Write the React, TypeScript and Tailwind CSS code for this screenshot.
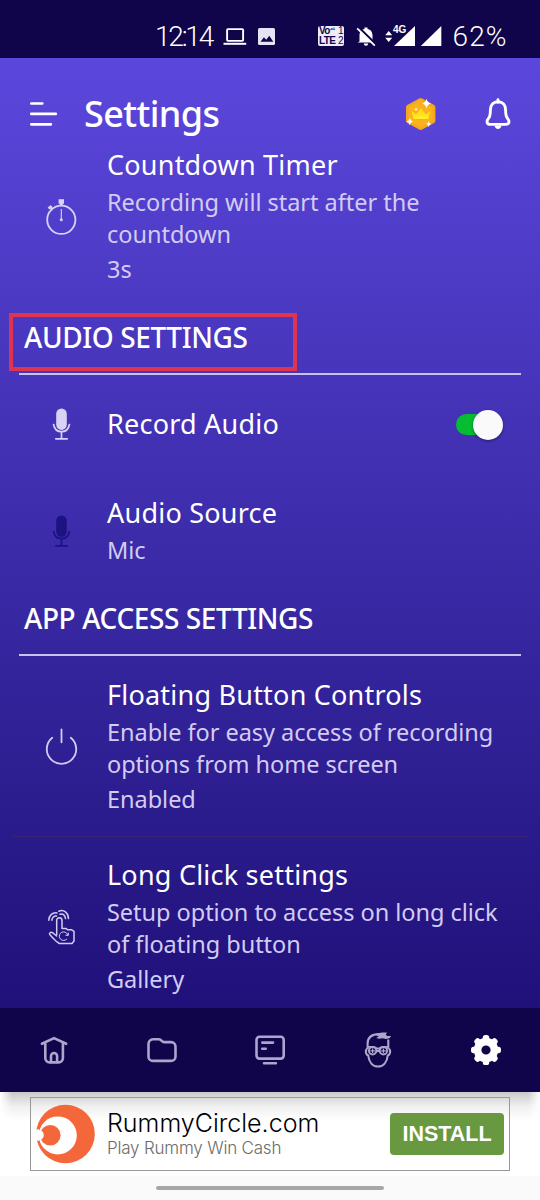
import React, { useState } from 'react';

const StopwatchIcon = () => (
  <svg width="36" height="44" viewBox="0 0 36 44" fill="none" stroke="#d9d2f6" strokeWidth="1.8">
    <circle cx="18.3" cy="26.8" r="14.1" />
    <rect x="15.6" y="6.2" width="5.4" height="4.6" fill="#d9d2f6" stroke="none" />
    <path d="M18.3 10v3" strokeWidth="3" />
    <path d="M5.5 15.5l3-2.6M7 14l2.6 2.4" strokeWidth="2.6" />
    <path d="M18.3 16v10" strokeWidth="1.1" />
    <circle cx="18.3" cy="26.8" r="1.5" fill="#d9d2f6" stroke="none" />
  </svg>
);

const MicIcon = ({ color }: { color: string }) => (
  <svg width="36" height="44" viewBox="0 0.5 36 44" fill="none" stroke={color} strokeWidth="1.7" strokeLinecap="round">
    <rect x="13.2" y="8" width="10.6" height="21.4" rx="5.3" fill={color} stroke="none" />
    <path d="M10.6 24c.8 4.4 3.8 7.200 7.9 7.200s7.100-2.800 7.900-7.200M18.500 31.500v6.700M12.800 38.300h11.400" />
  </svg>
);

const PowerIcon = () => (
  <svg width="36" height="44" viewBox="0 0.5 36 44" fill="none" stroke="#d3ccf2" strokeWidth="1.8" strokeLinecap="round">
    <path d="M9.200 15.200a14.700 14.700 0 1 0 18.600 0M18.500 7v12.800" />
  </svg>
);

const LongClickIcon = () => (
  <svg width="36" height="44" viewBox="0 0 36 44" fill="none" stroke="#d3ccf2" strokeWidth="1.5" strokeLinecap="round" strokeLinejoin="round">
    <path d="M13.700 31.500V17.400a2.650 2.650 0 0 1 5.300 0v8.200h4.200l1.300 1.200h4.200l2.300 1.500v9.700l-2 2.500H16.400c-2.600-1.600-4.200-2.800-5.600-4.600L6.700 31.400c-.8-1.700 1.200-2.700 2.700-1.700l4.300 3.300" />
    <path d="M5.800 17.200c0-4.500 3.400-8 8.200-7.300M8.900 17.200c.1-2.700 2.100-4.600 4.600-4.100M15.800 8.200c5-2.200 9.500 1.600 9.700 7.400M17 11.300c3-1 5.300.9 5.500 4.300" />
    <path d="M23.700 36.200a4.300 4.300 0 1 1-.2-6.200l1.300 2.100M25.300 30v2.300h-2.400" strokeWidth="1" />
  </svg>
);

const HomeIcon = () => (
  <svg width="36" height="36" viewBox="0 0 36 36" fill="none" stroke="#aba6cc" strokeWidth="2.600" strokeLinecap="round" strokeLinejoin="round">
    <path d="M5.900 11.800L18 6.100l12.200 5.700M9.300 11.500v14.700a4.200 4.200 0 0 0 4.200 4.200h9.200a4.200 4.200 0 0 0 4.200-4.200V11.500" />
    <path d="M15 30v-6a3.050 3.050 0 0 1 6.100 0v6" />
  </svg>
);

const FolderIcon = () => (
  <svg width="36" height="36" viewBox="0 0 36 36" fill="none" stroke="#aba6cc" strokeWidth="2.600" strokeLinejoin="round">
    <path d="M9 7.300h5.700c1.200 0 2 .4 2.700 1.300.7 1 1.400 1.500 2.600 1.500h7a4.500 4.500 0 0 1 4.500 4.500v9.800a4.500 4.500 0 0 1-4.500 4.500H9a4.500 4.500 0 0 1-4.500-4.500V11.800A4.500 4.500 0 0 1 9 7.300z" />
  </svg>
);

const ScreenIcon = () => (
  <svg width="36" height="36" viewBox="0 0 36 36" fill="none" stroke="#aba6cc" strokeWidth="2.600" strokeLinecap="round">
    <rect x="4.500" y="4.700" width="27.200" height="21.900" rx="3" />
    <path d="M10.300 10.600h10.700M10.300 16.700h3.400M12 31.300h11.900" />
  </svg>
);

const GamerIcon = () => (
  <svg width="36" height="36" viewBox="0 0 36 36" fill="none" stroke="#aba6cc" strokeWidth="2.100" strokeLinejoin="round">
    <path d="M7.600 17v-5.500C7.600 5.500 12 2.200 19 2.100M28.300 17V7.500" />
    <path d="M15 2.500C19 .6 23 .2 27 .6l-1.200 2 1.200 1.400h4.200l-1.700 2.300-3.600.7-3-.8-3.800.6-3-.9 2.700-1.300z" fill="#aba6cc" stroke="none" />
    <path d="M7.200 16.800c-2.200 1.200-1.500 6.300 1 6.500.8 6.800 4.500 11.200 9.800 11.200s9-4.400 9.800-11.200c2.500-.2 3.200-5.300 1-6.500" />
    <path d="M7.500 14.900h6.200l4.300 1.900 4.300-1.900h6.200" strokeWidth="1.800" />
    <circle cx="12.600" cy="18.800" r="3.700" strokeWidth="1.900" />
    <circle cx="23.400" cy="18.800" r="3.700" strokeWidth="1.900" />
    <path d="M12.600 16.500v4.600M10.300 18.800h4.600M15.700 17.200l4.600 3.200M20.300 17.200l-4.600 3.200M23.400 16.500v4.600M21.100 18.800h4.600" strokeWidth="1.200" />
  </svg>
);

const teeth = [0, 45, 90, 135, 180, 225, 270, 315];

const GearIcon = () => (
  <svg width="36" height="36" viewBox="0 0 36 36">
    <circle cx="18" cy="18" r="8.400" fill="none" stroke="#fff" strokeWidth="7.600" />
    {teeth.map((a) => (
      <rect key={a} x="14.800" y="3" width="6.400" height="6" rx="2.600" fill="#fff" transform={`rotate(${a} 18 18)`} />
    ))}
  </svg>
);

const StatusBar = () => (
  <div className="flex h-[58px] items-start bg-[#10054a] pt-[23px] font-['Roboto',sans-serif] text-[28px] leading-[28px] font-light text-white">
    <span className="ml-[155px] w-[68px] shrink-0 tracking-[-2.2px]">12:14</span>
    <svg width="53" height="28" viewBox="223 23 53 28" className="shrink-0">
      <rect x="227.100" y="29.100" width="16" height="11.800" rx="0.800" fill="none" stroke="#fff" strokeWidth="1.900" />
      <path d="M223.500 43.800h22.700" stroke="#fff" strokeWidth="2" />
      <rect x="258" y="28" width="17" height="17" rx="1.500" fill="#e6e3f5" />
      <path d="M260.500 41.700l3.400-4.400 2.300 2.400 3.100-4 4 6z" fill="#10054a" />
    </svg>
    <div className="ml-[42px] mt-[3px] flex h-[20px] w-[26px] shrink-0 justify-center gap-[1px] rounded-[2px] bg-[#eeecf8] font-['Liberation_Sans',sans-serif] text-[10px] leading-[9.500px] font-bold tracking-[-0.6px] text-[#10054a]">
      <div className="w-[18px]">
        <div className="flex">Vo<span className="text-[7px] leading-[7px]">⁴¹</span></div>
        <div>LTE</div>
      </div>
      <div className="font-medium">
        <div>1</div>
        <div>2</div>
      </div>
    </div>
    <div className="relative ml-[11px] h-[28px] w-[87px] shrink-0">
      <svg width="87" height="28" viewBox="355 23 87 28">
        <path d="M359.500 41.500v-6c0-4 2-6 5-6.600v-1.500h3v1.500c3 .6 5 2.600 5 6.600v4.500l2 2.500h-17z" fill="#fff" />
        <path d="M363.800 43.500h4.400a2.200 2.200 0 0 1-4.400 0z" fill="#fff" />
        <path d="M358.600 27.200l17.600 17.400" stroke="#10054a" strokeWidth="2.200" />
        <path d="M357.200 28.400l17.600 17.200" stroke="#fff" strokeWidth="1.800" />
        <path d="M385.200 35.200l3.500-4.300 3.500 4.300zM385.200 37.700h7l-3.500 4.300z" fill="#fff" />
        <path d="M415 26v20h-21z" fill="#fff" />
        <path d="M441.300 26v20h-20.500z" fill="#fff" />
        <path d="M392 25h14v9l-5 3h-9z" fill="#10054a" />
      </svg>
      <span className="absolute left-[38px] top-[2px] font-['Liberation_Sans',sans-serif] text-[10px] leading-[10px] font-bold">4G</span>
    </div>
    <span className="ml-[10.500px] tracking-[1.100px]">62%</span>
  </div>
);

const CrownBadge = () => (
  <svg width="32" height="34" viewBox="405 97 32 34">
    <path d="M419.200 98.500q1.500-.8 3 0l12 6.600q1.200.8 1.200 2.200v13.400q0 1.400-1.200 2.200l-12 6.600q-1.500.8-3 0l-12-6.600q-1.200-.8-1.200-2.200v-13.400q0-1.400 1.200-2.200z" fill="#f5a623" />
    <path d="M420.700 100.500l12 6.700v13.600l-12 6.700-12-6.700v-13.600z" fill="#fbb21c" />
    <path d="M411.500 111l4.500 3.600 5-6.100 5 6.100 4.400-3.600-2 7.500h-15z" fill="#ffe11f" />
    <path d="M413.400 116.500h15v2.300h-15z" fill="#ffef2a" />
    <path d="M426.500 98.500q.6 4.200 4.700 5-4.100.8-4.700 5-.6-4.200-4.700-5 4.100-.8 4.700-5zM409.800 117.500q.5 3.400 3.600 4-3.100.6-3.600 4-.5-3.400-3.600-4 3.100-.6 3.600-4zM428.700 121.300q.4 2.300 2.500 2.800-2.100.5-2.500 2.800-.4-2.300-2.500-2.800 2.100-.5 2.500-2.800zM416 107l.5 1.800 1.800.5-1.800.5-.5 1.800-.5-1.800-1.800-.5 1.800-.5z" fill="#fff" />
  </svg>
);

const Header = () => (
  <div className="flex h-[88px] items-start pt-[30px] pl-[29px]">
    <svg width="29" height="50" viewBox="29 88 29 50" stroke="#fff" strokeWidth="2.700" strokeLinecap="round">
      <path d="M31.300 103.500h11M31.300 113.900h24.500M31.300 124.300h19.600" />
    </svg>
    <h1 className="mt-[1px] ml-[26px] w-[321px] text-[36px] leading-[50px] font-medium tracking-[-0.600px]">Settings</h1>
    <div className="mt-[9px]"><CrownBadge /></div>
    <svg className="ml-[46px] mt-[8px]" width="30" height="36" viewBox="483 96 30 36" fill="none" stroke="#fff" strokeWidth="2.900" strokeLinejoin="round">
      <path d="M498 101.700c-4.800 0-7.600 3.600-7.600 8.200 0 4.700-.4 6.600-1.900 8.500-2.400 3-1.700 6 1.700 6h15.600c3.400 0 4.100-3 1.700-6-1.500-1.900-1.900-3.800-1.900-8.500 0-4.600-2.800-8.200-7.600-8.200z" />
      <path d="M498 99.800v2.500" strokeLinecap="round" />
      <path d="M494.500 125.500h7c-.4 2.200-1.600 3.500-3.500 3.500s-3.100-1.300-3.500-3.500z" fill="#fff" stroke="none" />
    </svg>
  </div>
);

type RowProps = {
  icon: React.ReactNode;
  title: string;
  desc?: React.ReactNode;
  value?: string;
  children?: React.ReactNode;
};

const Row = ({ icon, title, desc, value, children }: RowProps) => (
  <div className="flex items-center pl-[43px]">
    {/* negative margins keep the icon from stretching single line rows */}
    <div className="-my-1 w-[64px] shrink-0">{icon}</div>
    <div className={`mt-[1px] flex-1 whitespace-nowrap ${desc ? '-mb-[2px]' : '-mb-[1px]'}`}>
      <h3 className="text-[27px] leading-[36px] tracking-[0.220px]">{title}</h3>
      {desc && <p className="mt-[3px] text-[23.500px] leading-[32px] tracking-[-0.030px] text-[#d3ccf2]">{desc}</p>}
      {value && <p className="mt-[3px] text-[23.500px] leading-[32px] tracking-[-0.030px] text-[#d3ccf2]">{value}</p>}
    </div>
    {children}
  </div>
);

const SectionTitle = ({ text, marked }: { text: string; marked?: boolean }) => (
  <div className="relative mx-[19px] border-b-[2px] border-[#c9c2ec] pb-[17px] pl-[5px]">
    <h2 className="text-[28px] leading-[38px] font-medium tracking-[-0.400px] whitespace-nowrap">{text}</h2>
    {marked && <div className="absolute -left-[10px] -top-[5px] h-[58px] w-[288px] border-[4px] border-[#df3450]"></div>}
  </div>
);

const AdBanner = () => (
  <div className="relative h-[84px] bg-white px-[30px] pt-[5px]">
    <div className="absolute inset-x-0 top-0 h-[28px] bg-linear-to-b from-[#c9c9c9] via-[#efefef] via-50% to-white [mask-image:linear-gradient(to_right,transparent,black_12px,black_528px,transparent)]"></div>
    <div className="relative flex h-[74px] w-[480px] items-center border border-[#989898] font-['Inter',sans-serif] font-light">
      <svg className="ml-[5px] shrink-0" width="60" height="60" viewBox="0 0 60 60">
        <circle cx="29.500" cy="30" r="29.300" fill="#f4673a" />
        <circle cx="21.800" cy="31.400" r="19" fill="#fff" />
        <circle cx="14.300" cy="31.200" r="10.300" fill="#f4673a" />
        <circle cx="2.500" cy="31" r="5.300" fill="#fff" />
        <path d="M0 26l3-1v12l-3-1z" fill="#fff" />
      </svg>
      <div className="ml-[11px] w-[283px] whitespace-nowrap">
        <div className="text-[25px] leading-[28px] text-black">RummyCircle.com</div>
        <div className="text-[17px] leading-[22px] tracking-[-0.200px] text-[#6b6b6b]">Play Rummy Win Cash</div>
      </div>
      <button className="h-[42px] w-[114px] rounded-[4px] bg-[#689840] font-['Liberation_Sans',sans-serif] text-[21.500px] font-bold text-white">INSTALL</button>
    </div>
  </div>
);

const App = () => {
  const [recordAudio, setRecordAudio] = useState(true);

  return (
    <div className="h-[1200px] w-[540px] overflow-hidden bg-[#fafafa] font-['Noto_Sans',sans-serif] text-white">
      <StatusBar />
      <main className="h-[950px] bg-linear-to-b from-[#5c47dd] to-[#20107a]">
        <Header />
        <Row icon={<StopwatchIcon />} title="Countdown Timer" desc={<>Recording will start after the<br />countdown</>} value="3s" />

        <div className="pt-[35px]">
          <SectionTitle text="AUDIO SETTINGS" marked />
        </div>
        <div className="pt-[30px]">
          <Row icon={<MicIcon color="#d9d2f6" />} title="Record Audio">
            <button onClick={() => setRecordAudio(!recordAudio)} className="relative mr-[36px] h-[30px] w-[49px]">
              <span className={`absolute left-[1px] top-[6px] h-[21px] w-[42px] rounded-full ${recordAudio ? 'bg-[#06bd32]' : 'bg-zinc-400'}`}></span>
              <span className={`absolute top-[2px] h-[30px] w-[30px] rounded-full bg-[#fafafa] shadow-[0_1px_3px_rgba(0,0,0,0.45)] ${recordAudio ? 'right-[1px]' : 'left-0'}`}></span>
            </button>
          </Row>
        </div>
        <div className="pt-[53px]">
          <Row icon={<MicIcon color="#1d1282" />} title="Audio Source" value="Mic" />
        </div>

        <div className="pt-[34px]">
          <SectionTitle text="APP ACCESS SETTINGS" />
        </div>
        <div className="pt-[20px]">
          <Row icon={<PowerIcon />} title="Floating Button Controls" desc={<>Enable for easy access of recording<br />options from home screen</>} value="Enabled" />
        </div>
        <div className="mx-[12px] mt-[23px] border-t border-[#36256f]"></div>
        <div className="pt-[19px]">
          <Row icon={<LongClickIcon />} title="Long Click settings" desc={<>Setup option to access on long click<br />of floating button</>} value="Gallery" />
        </div>
      </main>

      <nav className="grid h-[84px] grid-cols-5 items-center justify-items-center bg-[#10054a]">
        <HomeIcon />
        <FolderIcon />
        <ScreenIcon />
        <GamerIcon />
        <GearIcon />
      </nav>
      <AdBanner />
      <div className="flex h-[24px] justify-center bg-[#fafafa] pt-[10px]">
        <div className="h-[4px] w-[228px] rounded-full bg-[#a6a6a6]"></div>
      </div>
    </div>
  );
};

export default App;
